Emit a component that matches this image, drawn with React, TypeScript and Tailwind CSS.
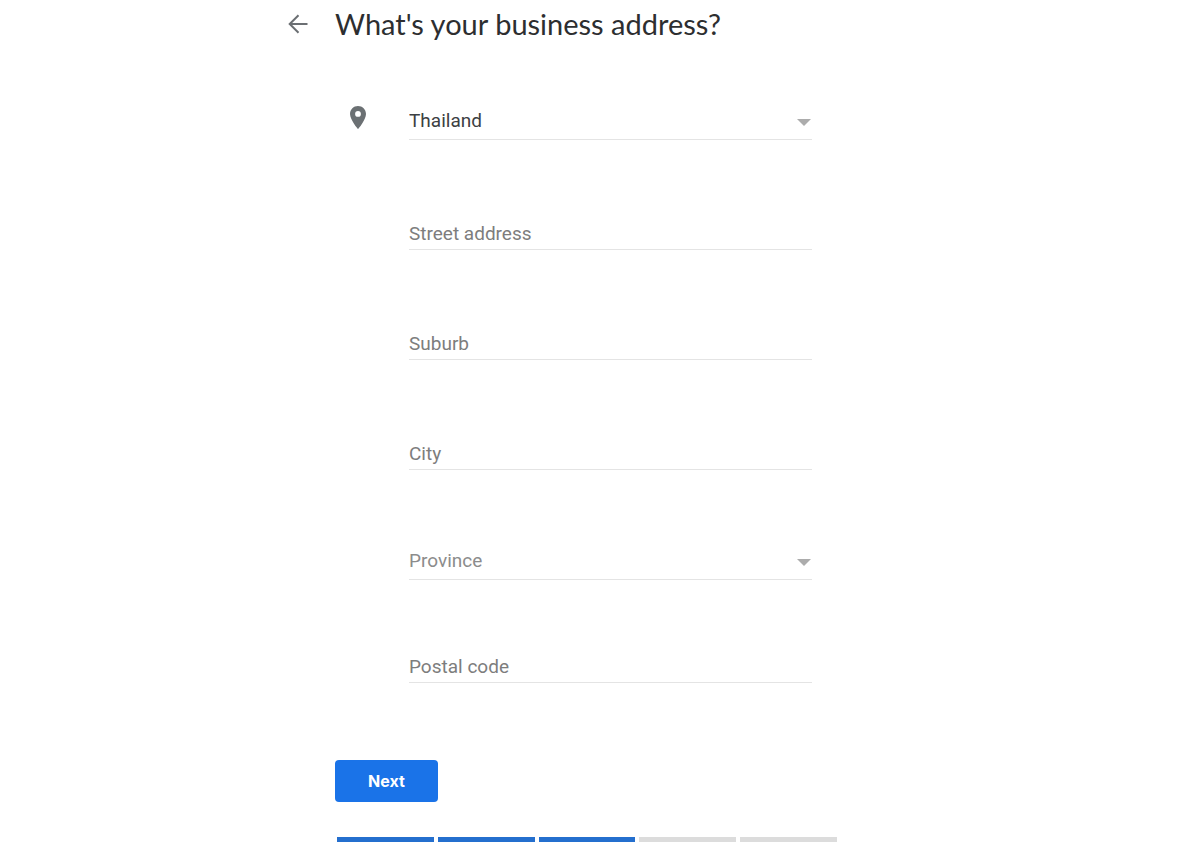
import React, { useState } from 'react';

interface AddressData {
  country: string;
  street: string;
  suburb: string;
  city: string;
  province: string;
  postalCode: string;
}

interface FieldProps {
  id: keyof AddressData;
  label: string;
  value: string;
  onChange: (id: keyof AddressData, value: string) => void;
}

const COUNTRIES = ['Thailand', 'Malaysia', 'Singapore', 'Vietnam'];
const PROVINCES = ['Bangkok', 'Chiang Mai', 'Chon Buri', 'Khon Kaen', 'Phuket'];

const TOTAL_STEPS = 5;
const CURRENT_STEP = 3;

function TextField({ id, label, value, onChange }: FieldProps) {
  return (
    <input
      id={id}
      type="text"
      aria-label={label}
      value={value}
      placeholder={label}
      onChange={e => onChange(id, e.target.value)}
      className="block w-full h-[33px] bg-transparent border-b border-[#e4e4e4] text-[19px] text-[#3c4043] placeholder:text-[#7d7d7d] outline-none focus:border-[#1a73e8]"
    />
  );
}

function SelectField({ id, label, value, onChange, options }: FieldProps & { options: string[] }) {
  return (
    <div className="relative">
      <select
        id={id}
        aria-label={label}
        value={value}
        onChange={e => onChange(id, e.target.value)}
        className={`block w-full h-10 pt-[3px] bg-transparent border-b border-[#e4e4e4] text-[19px] appearance-none outline-none cursor-pointer focus:border-[#1a73e8] ${
          value ? 'text-[#3c4043]' : 'text-[#8c8c8c]'
        }`}
      >
        {!value && <option value="">{label}</option>}
        {options.map(option => (
          <option key={option} value={option}>{option}</option>
        ))}
      </select>
      <svg viewBox="0 0 14 7" className="absolute right-px top-[19px] w-3.5 h-[7px] fill-[#acacac] pointer-events-none">
        <path d="M0 0h14L7 7z" />
      </svg>
    </div>
  );
}

export default function App() {
  const [address, setAddress] = useState<AddressData>({
    country: 'Thailand',
    street: '',
    suburb: '',
    city: '',
    province: '',
    postalCode: ''
  });

  const handleChange = (id: keyof AddressData, value: string) => {
    setAddress(prev => ({ ...prev, [id]: value }));
  };

  return (
    <main className="min-h-screen bg-white px-4 pt-1 font-[Roboto,sans-serif]">
      <div className="max-w-[624px] mx-auto">
        {/* Header */}
        <header className="flex items-center h-10">
          <button type="button" aria-label="Back" className="w-[47px] shrink-0 cursor-pointer">
            <svg viewBox="0 0 20 20" className="w-5 h-5 fill-none stroke-[#6b6f73] stroke-2">
              <path d="M19.5 10H2M10.5 1.2L1.7 10l8.8 8.8" />
            </svg>
          </button>
          <h1 className="text-[29px] leading-10 text-[#2d2e30] font-[Lato,sans-serif]">What's your business address?</h1>
        </header>

        <form onSubmit={e => e.preventDefault()} className="pl-[47px] pt-14">
          {/* Address fields */}
          <div className="flex">
            <div className="w-[74px] shrink-0 pl-[15px] pt-1.5">
              <svg viewBox="0 0 16 23" className="w-4 h-[23px] fill-[#6b7073]">
                <path fillRule="evenodd" d="M8 0C3.6 0 0 3.5 0 7.9 0 13.8 8 23 8 23s8-9.2 8-15.1C16 3.5 12.4 0 8 0zm0 10.8a2.9 2.9 0 1 1 0-5.8 2.9 2.9 0 0 1 0 5.8z" />
              </svg>
            </div>
            <div className="flex-1 max-w-[403px] flex flex-col gap-[70px]">
              <div className="flex flex-col gap-[77px]">
                <SelectField id="country" label="Country" value={address.country} onChange={handleChange} options={COUNTRIES} />
                <TextField id="street" label="Street address" value={address.street} onChange={handleChange} />
                <TextField id="suburb" label="Suburb" value={address.suburb} onChange={handleChange} />
                <TextField id="city" label="City" value={address.city} onChange={handleChange} />
              </div>
              <SelectField id="province" label="Province" value={address.province} onChange={handleChange} options={PROVINCES} />
              <TextField id="postalCode" label="Postal code" value={address.postalCode} onChange={handleChange} />
            </div>
          </div>

          <button
            type="submit"
            className="block mt-[77px] h-[42px] min-w-[103px] px-6 rounded bg-[#1a73e8] text-white text-base font-['Inter',sans-serif] font-bold cursor-pointer hover:bg-[#1b66c9]"
          >
            Next
          </button>
        </form>

        {/* Progress */}
        <div
          role="progressbar"
          aria-label="Setup progress"
          aria-valuemin={0}
          aria-valuemax={TOTAL_STEPS}
          aria-valuenow={CURRENT_STEP}
          className="flex gap-1 ml-[49px] mt-[35px] max-w-[500px]"
        >
          {Array.from({ length: TOTAL_STEPS }, (_, i) => (
            <div key={i} className={`flex-1 h-[5px] ${i < CURRENT_STEP ? 'bg-[#246fce]' : 'bg-[#dcdcdc]'}`} />
          ))}
        </div>
      </div>
    </main>
  );
}
